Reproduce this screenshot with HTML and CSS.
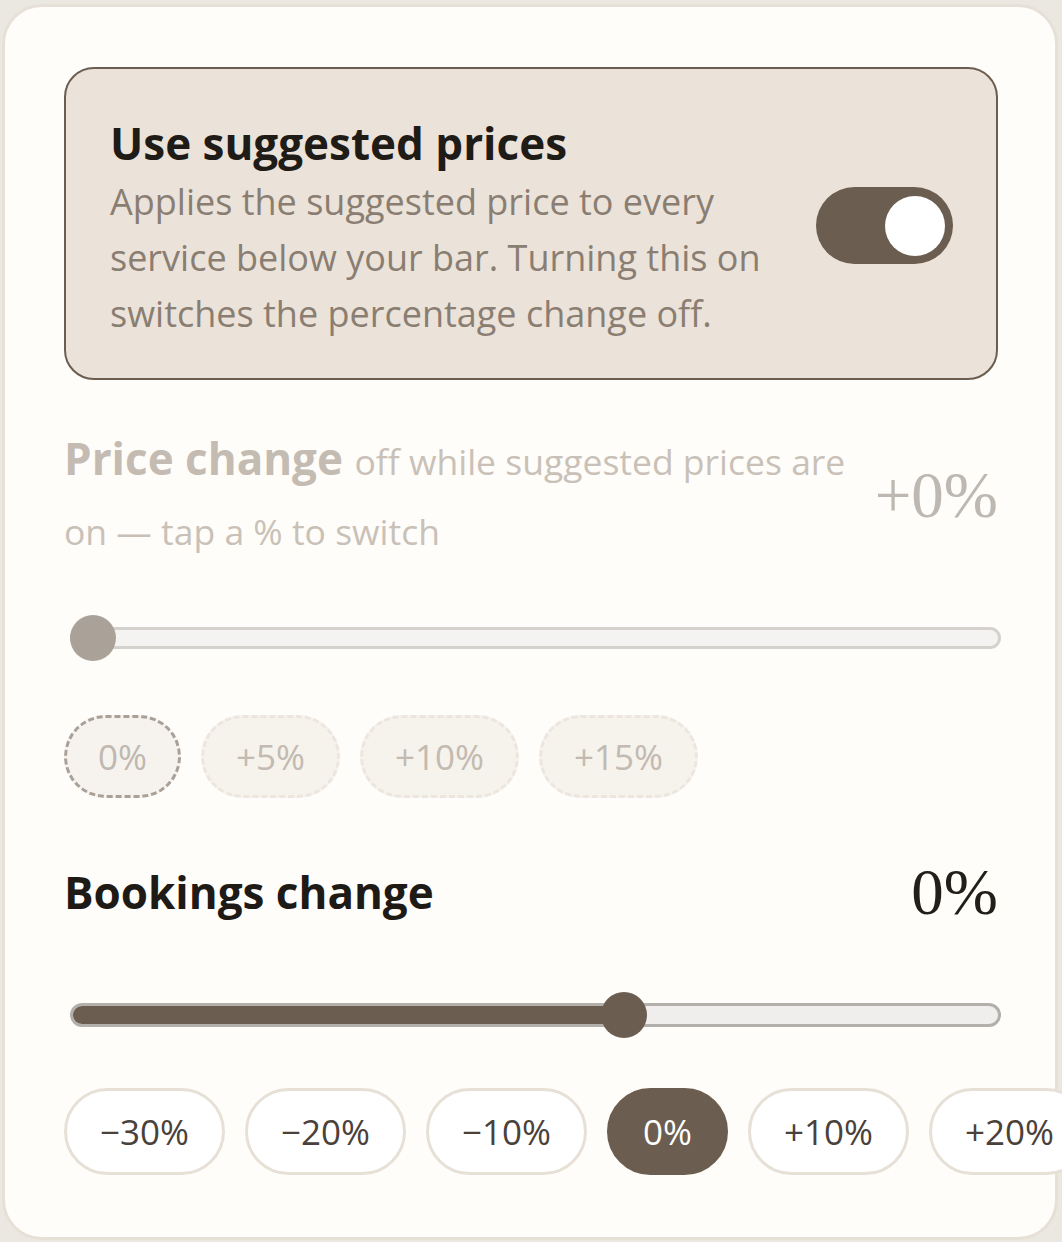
FILE: index.html
```html
<!DOCTYPE html>
<html lang="en">
<head>
	<meta charset="UTF-8">
	<title>Pricing what-if</title>
	<link rel="stylesheet" href="styles.css">
</head>
<body>
	<div class="card">
		<label class="suggest">
			<div class="suggest-text">
				<div class="suggest-title">Use suggested prices</div>
				<p class="suggest-desc">Applies the suggested price to every service below your bar. Turning this on switches the percentage change off.</p>
			</div>
			<span class="switch on"><span class="knob"></span></span>
		</label>

		<section class="field price is-off">
			<div class="field-head">
				<div class="field-label"><strong>Price change</strong> <span class="hint">off while suggested prices are on — tap a % to switch</span></div>
				<div class="field-value">+0%</div>
			</div>
			<div class="range" style="--pos: 0">
				<div class="range-track"><div class="range-fill"></div></div>
				<div class="range-thumb"></div>
			</div>
			<div class="chips">
				<button class="chip current">0%</button>
				<button class="chip">+5%</button>
				<button class="chip">+10%</button>
				<button class="chip">+15%</button>
			</div>
		</section>

		<section class="field bookings">
			<div class="field-head">
				<div class="field-label"><strong>Bookings change</strong></div>
				<div class="field-value">0%</div>
			</div>
			<div class="range" style="--pos: 0.6">
				<div class="range-track"><div class="range-fill"></div></div>
				<div class="range-thumb"></div>
			</div>
			<div class="chips">
				<button class="chip">−30%</button>
				<button class="chip">−20%</button>
				<button class="chip">−10%</button>
				<button class="chip current">0%</button>
				<button class="chip">+10%</button>
				<button class="chip">+20%</button>
			</div>
		</section>
	</div>
</body>
</html>
```

FILE: styles.css
```css
html, body {
	margin: 0;
	padding: 0;
}
body {
	background-color: #ebe7e1;
	font-family: "Open Sans", "Noto Sans", sans-serif;
	overflow: hidden;
}
.card {
	box-sizing: border-box;
	width: 1056px;
	margin: 4px 0 0 2px;
	padding: 60px 57px 62px 59px;
	background-color: #fffdf9;
	border: 3px solid #e6e0d7;
	border-radius: 40px;
}

/* suggested prices toggle */
.suggest {
	display: flex;
	align-items: center;
	gap: 40px;
	padding: 44px 43px 36px 44px;
	background-color: #ebe3da;
	border: 2px solid #6b5d4f;
	border-radius: 30px;
}
.suggest-text {
	flex: 1 1 0;
}
.suggest-title {
	font-size: 44px;
	line-height: 61px;
	font-weight: 700;
	color: #1f1b17;
}
.suggest-desc {
	margin: 0;
	max-width: 660px;
	font-size: 36px;
	line-height: 56px;
	color: #8a7e72;
}
.switch {
	flex: none;
	display: flex;
	justify-content: flex-end;
	align-items: center;
	box-sizing: border-box;
	width: 137px;
	height: 77px;
	margin-top: -4px;
	padding: 0 8px;
	border-radius: 40px;
	background-color: #6b5d4f;
}
.knob {
	width: 60px;
	height: 60px;
	border-radius: 50%;
	background-color: #fff;
}

/* slider fields */
.field {
	margin-top: 45px;
}
.field-head {
	display: flex;
	align-items: center;
	gap: 20px;
}
.field-label {
	flex: 1 1 0;
	font-size: 44px;
	line-height: 67px;
	color: #1e1a16;
}
.field-label strong {
	font-weight: 700;
}
.hint {
	font-size: 35.5px;
	color: #c9c1b8;
}
.field-value {
	font-family: "Liberation Serif", "Times New Roman", serif;
	font-size: 65px;
	line-height: 74px;
	color: #221e1a;
}

.range {
	position: relative;
	display: flex;
	align-items: center;
	height: 46px;
	margin: 50px -3px 0 6px;
}
.range-track {
	flex: 1 1 0;
	box-sizing: border-box;
	height: 24px;
	border: 3px solid #b3b0ab;
	border-radius: 12px;
	background-color: #efeeed;
	overflow: hidden;
}
.range-fill {
	width: calc(23px + (100% - 46px) * var(--pos));
	height: 100%;
	background-color: #6b5d4f;
}
.range-thumb {
	position: absolute;
	top: 0;
	left: calc((100% - 46px) * var(--pos));
	width: 46px;
	height: 46px;
	border-radius: 50%;
	background-color: #6b5d4f;
}

.chips {
	display: flex;
	gap: 20px;
	margin-top: 54px;
	white-space: nowrap;
}
.chip {
	flex: none;
	box-sizing: border-box;
	height: 87px;
	padding: 0 33px;
	font-family: inherit;
	font-size: 35px;
	color: #4a413a;
	background-color: #fff;
	border: 3px solid #e6e0d7;
	border-radius: 44px;
}
.chip.current {
	background-color: #6b5d4f;
	border-color: #6b5d4f;
	color: #fff;
}

/* price field is greyed out while suggested prices are on */
.is-off .field-label {
	color: #c4bbb2;
}
.is-off .field-value {
	color: #bdb8b2;
}
.is-off .range-track {
	height: 22px;
	border-color: #d5d2ce;
	background-color: #f4f3f1;
}
.is-off .range-thumb {
	background-color: #aaa199;
}
.is-off .chip {
	height: 83px;
	padding: 0 32px;
	color: #c3bab1;
	background-color: #f6f2ec;
	border: 3px dashed #ece6df;
}
.is-off .chip.current {
	padding: 0 31px;
	border-color: #a9a097;
	background-color: #f6f3ee;
	color: #c0b8b0;
}

.bookings {
	margin-top: 57px;
}
.bookings .range {
	margin-top: 63px;
}
.bookings .chips {
	margin-top: 50px;
}
```
